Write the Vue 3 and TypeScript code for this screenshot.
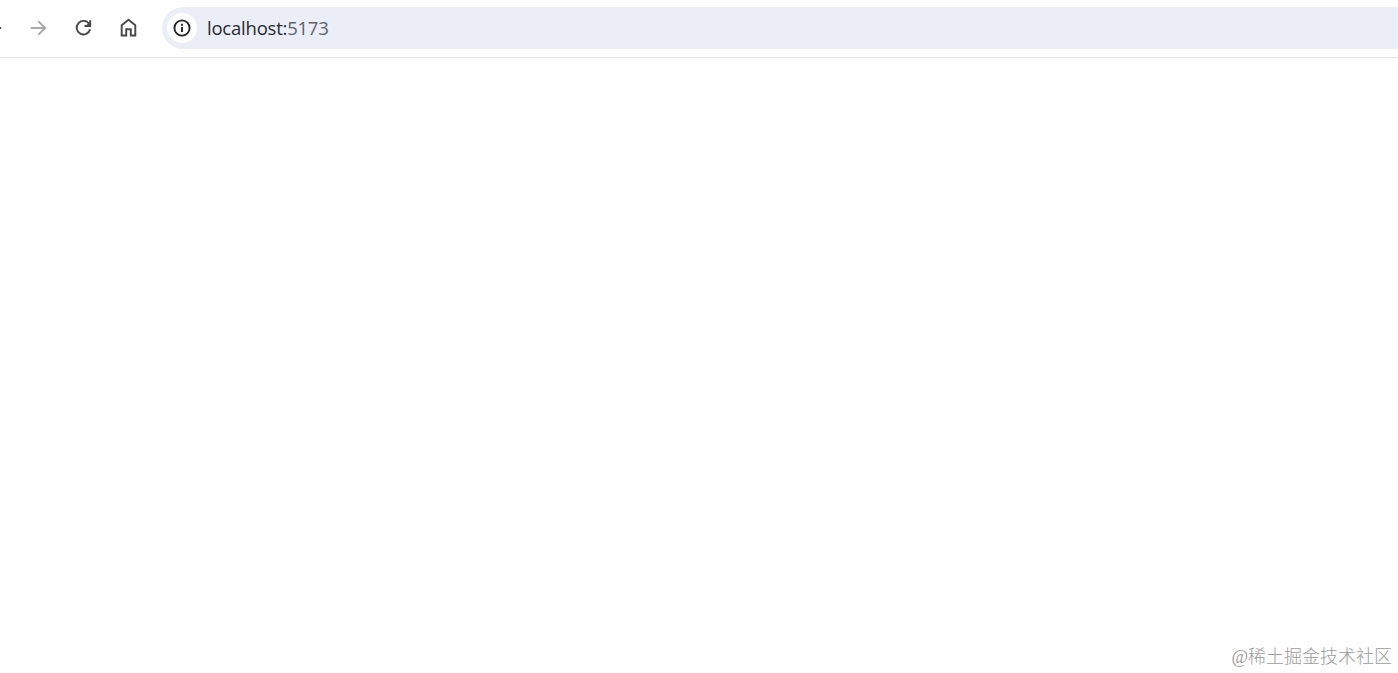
<template>
  <div class="browser">
    <header class="toolbar">
      <nav class="nav-buttons">
        <button type="button" class="nav-button" aria-label="Back">
          <svg viewBox="0 0 24 24" class="icon"><path d="M20 12.5H4.8M12 5.3L4.8 12.5l7.2 7.2" /></svg>
        </button>
        <button type="button" class="nav-button disabled" aria-label="Forward" disabled>
          <svg viewBox="0 0 24 24" class="icon"><path d="M4 12.5H18.6M11.8 5.3L19 12.5l-7.2 7.2" /></svg>
        </button>
        <button type="button" class="nav-button" aria-label="Reload">
          <svg viewBox="0 0 24 24" class="icon">
            <path d="M18 8.4A7.1 7.1 0 1 0 18.9 13.8" />
            <path d="M19 4.4v6h-6M19 7L15.6 10.4" />
          </svg>
        </button>
        <button type="button" class="nav-button" aria-label="Home">
          <svg viewBox="0 0 24 24" class="icon">
            <path d="M4.9 9.6L12 4l7.1 5.6V20.3h-4.7v-6.4H9.6v6.4H4.9z" />
          </svg>
        </button>
      </nav>
      <div class="address-bar">
        <span class="site-info">
          <svg viewBox="0 0 18 18" class="info-icon">
            <circle cx="9" cy="9" r="7.6" />
            <path d="M9 8v5M9 4.8v1.9" />
          </svg>
        </span>
        <span class="url">{{ host }}:<span class="port">{{ port }}</span></span>
      </div>
    </header>
    <main class="page">
      <span class="watermark">{{ watermark }}</span>
    </main>
  </div>
</template>

<script setup lang="ts">
import { ref } from 'vue';

const host = ref<string>('localhost');
const port = ref<number>(5173);
const watermark = ref<string>('@稀土掘金技术社区');
</script>

<style>
body {
  margin: 0;
  background-color: #fefefe;
  overflow: hidden;
}
</style>

<style scoped>
.browser {
  display: flex;
  flex-direction: column;
  height: 100vh;
  overflow: hidden;
}

.toolbar {
  display: flex;
  align-items: center;
  box-sizing: border-box;
  height: 58px;
  padding-bottom: 1px;
  border-bottom: 1px solid #e1e2e3;
}

.nav-buttons {
  display: flex;
  flex: none;
  gap: 5px;
  margin-left: -27px;
}

.nav-button {
  display: flex;
  align-items: center;
  justify-content: center;
  width: 40px;
  height: 40px;
  padding: 0 0 1px;
  box-sizing: border-box;
  border: none;
  background: none;
  color: #47494b;
}

.nav-button.disabled {
  color: #a9a9a9;
}

.icon {
  width: 23px;
  height: 23px;
  fill: none;
  stroke: currentColor;
  stroke-width: 2;
}

.address-bar {
  display: flex;
  align-items: center;
  flex: 1;
  height: 42px;
  margin-left: 14px;
  padding-left: 5px;
  border-radius: 21px 0 0 21px;
  background-color: #ebeef7;
}

.site-info {
  display: flex;
  align-items: center;
  justify-content: center;
  width: 30px;
  height: 30px;
  border-radius: 50%;
  background-color: #fefefe;
}

.info-icon {
  width: 18px;
  height: 18px;
  fill: none;
  stroke: #222326;
  stroke-width: 1.9;
}

.url {
  margin-left: 10px;
  font-family: "Open Sans", "Noto Sans", sans-serif;
  font-size: 18.5px;
  letter-spacing: -0.22px;
  line-height: 26px;
  color: #292a2d;
}

.port {
  color: #606368;
}

.page {
  display: flex;
  flex: 1;
  align-items: flex-end;
  justify-content: flex-end;
  padding: 0 6px 3px 0;
}

.watermark {
  font-family: "Liberation Serif", "Noto Sans CJK SC", serif;
  font-size: 18px;
  font-weight: 300;
  line-height: 26px;
  color: #9c9c9c;
}
</style>
